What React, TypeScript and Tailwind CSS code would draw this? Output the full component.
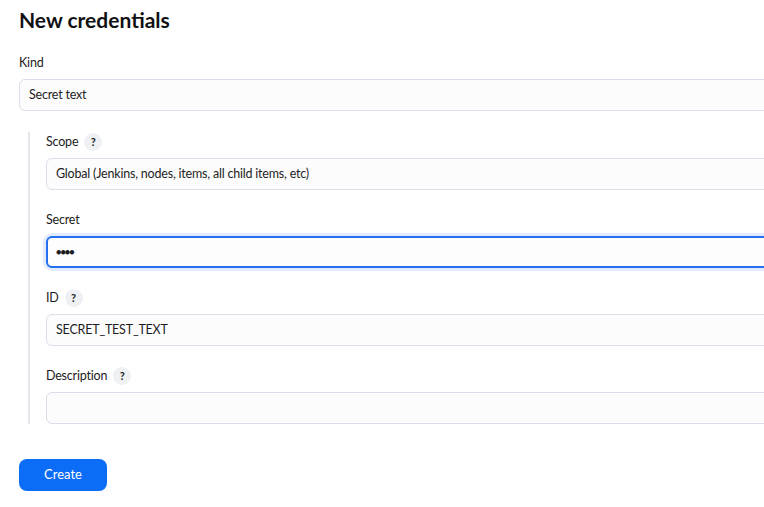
import React from "react";

const HelpBadge = () => (
    <span className="ml-[6px] inline-flex h-[18px] w-[18px] items-center justify-center rounded-full bg-[#eef0f4] text-[11px] font-bold tracking-normal text-[#1c1c22]">?</span>
);

const Field = ({ label, help, value, focused, password }: { label: string; help?: boolean; value: string; focused?: boolean; password?: boolean }) => (
    <div className="flex flex-col">
        <div className="flex h-[20px] items-center text-[12.5px] tracking-[-0.2px] text-[#1c1c22]">
            {label}
            {help && <HelpBadge />}
        </div>
        <div
            className={
                focused
                    ? "mt-[6px] flex h-[32px] w-[900px] items-center rounded-[6px] border-2 border-[#2470f0] bg-[#fdfdfe] pl-[8px] text-[12.5px] tracking-[-0.2px] text-[#1c1c22] shadow-[0_0_0_3px_#e2ebfc]"
                    : "mt-[6px] flex h-[32px] w-[900px] items-center rounded-[6px] border border-[#dbdee8] bg-[#fcfcfd] pl-[9px] text-[12.5px] tracking-[-0.2px] text-[#1c1c22]"
            }
        >
            {password ? <span className="text-[9px] tracking-[-1px]">●●●●</span> : value}
        </div>
    </div>
);

export default function App() {
    return (
        <div className="h-[507px] w-[764px] overflow-hidden bg-white pl-[19px] pt-[7px]" style={{ fontFamily: "Lato, 'Noto Sans', sans-serif" }}>
            <h1 className="text-[21px] font-bold leading-[26px] text-[#111114]">New credentials</h1>
            <div className="mt-[20px]">
                <Field label="Kind" value="Secret text" />
            </div>
            <div className="mt-[21px] ml-[9px] flex flex-col gap-[20px] border-l-2 border-[#e4e6ec] pl-[16px]">
                <Field label="Scope" help value="Global (Jenkins, nodes, items, all child items, etc)" />
                <Field label="Secret" value="" focused password />
                <Field label="ID" help value="SECRET_TEST_TEXT" />
                <Field label="Description" help value="" />
            </div>
            <button className="mt-[35px] h-[32px] w-[88px] rounded-[8px] bg-[#0b6cf7] text-[13px] font-normal text-white">Create</button>
        </div>
    );
}
